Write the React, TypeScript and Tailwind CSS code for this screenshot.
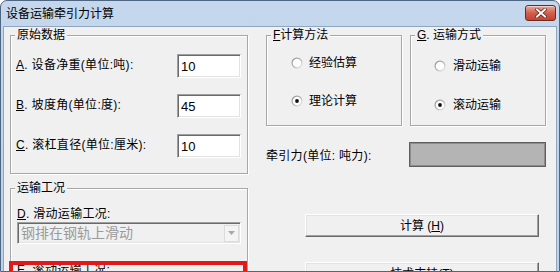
import React from "react";

const U = ({ c }: { c: string }) => <span className="underline underline-offset-[1px]">{c}</span>;

function Radio({ checked }: { checked?: boolean }) {
  return (
    <svg width="12" height="12" viewBox="0 0 12 12" className="shrink-0">
      <defs>
        <linearGradient id="rg" x1="0" y1="0" x2="1" y2="1">
          <stop offset="0" stopColor="#8a8a8a" />
          <stop offset="0.55" stopColor="#b8b8b8" />
          <stop offset="1" stopColor="#f4f4f4" />
        </linearGradient>
      </defs>
      <circle cx="6" cy="6" r="5.5" fill="url(#rg)" />
      <circle cx="6" cy="6" r="4.3" fill="#fdfdfd" />
      {checked && <circle cx="6" cy="6" r="1.9" fill="#111" />}
    </svg>
  );
}

function Group({
  title,
  className,
  children,
}: {
  title: React.ReactNode;
  className?: string;
  children?: React.ReactNode;
}) {
  return (
    <div
      className={
        "relative border border-[#a7a7a7] shadow-[inset_1px_1px_0_#ffffff,1px_1px_0_#ffffff] " +
        (className ?? "")
      }
    >
      <span className="absolute left-[4px] top-[-9px] bg-[#f0f0f0] px-[2px] text-[12px] leading-[16px] text-black whitespace-nowrap">
        {title}
      </span>
      {children}
    </div>
  );
}

function Field({ label, value }: { label: React.ReactNode; value: string }) {
  return (
    <div className="flex items-center justify-between">
      <span className="text-[12px] leading-[16px] -mt-[3px] tracking-[0.3px]">{label}</span>
      <div className="w-[64px] h-[24px] bg-white border border-t-[#a0a0a0] border-l-[#a0a0a0] border-b-white border-r-white shadow-[inset_1px_1px_0_#696969,inset_-1px_-1px_0_#e3e3e3] flex items-center pl-[3px] text-[13px] leading-none">
        {value}
      </div>
    </div>
  );
}

function Button({ children }: { children: React.ReactNode }) {
  return (
    <div className="ml-[39px] w-[234px] h-[23px] shrink-0 bg-[#f0f0f0] border border-t-white border-l-white border-b-[#696969] border-r-[#696969] shadow-[inset_-1px_-1px_0_#a0a0a0,inset_1px_1px_0_#e3e3e3] flex items-center justify-center text-[12px] leading-none">
      {children}
    </div>
  );
}

export default function App() {
  return (
    <div className="w-[560px] h-[272px] overflow-hidden bg-[#ffffff]">
      <div className="w-[560px] h-[272px] flex flex-col bg-gradient-to-b from-[#c4d7ed] to-[#bdd2ea] border border-[#4f6683] rounded-t-[7px] font-['Liberation_Sans','Noto_Sans_CJK_SC',sans-serif] text-black">
        {/* Title bar */}
        <div className="h-[25px] shrink-0 flex items-start justify-between">
          <span className="pl-[5px] pt-[5px] text-[12px] leading-[16px] text-black">设备运输牵引力计算</span>
          <div className="mt-[4px] mr-[3px] w-[31px] h-[16px] rounded-[3px] border border-[#6b2a22] bg-gradient-to-b from-[#e9a89b] via-[#d25e4b] to-[#c3432f] shadow-[inset_0_1px_0_#f6cfc6] flex items-center justify-center">
            <svg width="12" height="10" viewBox="0 0 12 10">
              <path d="M2 1.5 L10 8.5 M10 1.5 L2 8.5" stroke="#5a1b12" strokeWidth="3.4" strokeLinecap="square" />
              <path d="M2 1.5 L10 8.5 M10 1.5 L2 8.5" stroke="#ffffff" strokeWidth="2" strokeLinecap="square" />
            </svg>
          </div>
        </div>
        {/* Client area */}
        <div className="flex-1 mx-[2px] bg-[#f0f0f0] border-l border-r border-t border-[#8fa6c1] flex items-start overflow-hidden">
          {/* Left column */}
          <div className="ml-[6px] pt-[8px] w-[238px] shrink-0 flex flex-col">
            <Group title="原始数据" className="h-[139px] pt-[18px] pl-[5px] pr-[6px] flex flex-col gap-[16px]">
              <Field
                label={<><U c="A" />. 设备净重(单位:吨):</>}
                value="10"
              />
              <Field
                label={<><U c="B" />. 坡度角(单位:度):</>}
                value="45"
              />
              <Field
                label={<><U c="C" />. 滚杠直径(单位:厘米):</>}
                value="10"
              />
            </Group>
            <Group title="运输工况" className="mt-[14px] h-[120px] pt-[17px] px-[6px] flex flex-col">
              <span className="text-[12px] leading-[16px] tracking-[0.3px]">
                <U c="D" />. 滑动运输工况:
              </span>
              <div className="h-[22px] bg-[#f0f0f0] border border-t-[#a0a0a0] border-l-[#a0a0a0] border-b-white border-r-white shadow-[inset_1px_1px_0_#696969,inset_-1px_-1px_0_#e3e3e3] flex items-center justify-between pl-[3px] pr-[1px]">
                <span className="text-[14px] leading-none text-[#9a9a9a]">钢排在钢轨上滑动</span>
                <div className="w-[15px] h-[17px] bg-[#f4f4f4] border border-[#dcdcdc] flex items-center justify-center">
                  <svg width="7" height="4" viewBox="0 0 7 4">
                    <path d="M0 0 H7 L3.5 4 Z" fill="#a8a8a8" />
                  </svg>
                </div>
              </div>
              <span className="mt-[18px] text-[12px] leading-[16px] tracking-[0.3px]">
                <U c="E" />. 滚动运输工况:
              </span>
              <div className="absolute left-[-2px] top-[72px] w-[238px] h-[40px] border-[4px] border-[#e3181b]" />
            </Group>
          </div>
          {/* Right column */}
          <div className="ml-[18px] pt-[8px] w-[280px] shrink-0 flex flex-col">
            <div className="flex gap-[8px]">
              <Group title={<><U c="F" />计算方法</>} className="w-[136px] h-[91px] pt-[19px] pl-[24px] flex flex-col gap-[22px]">
                <div className="flex items-center gap-[6px] h-[16px]">
                  <Radio />
                  <span className="text-[12px] leading-[16px]">经验估算</span>
                </div>
                <div className="flex items-center gap-[6px] h-[16px]">
                  <Radio checked />
                  <span className="text-[12px] leading-[16px]">理论计算</span>
                </div>
              </Group>
              <Group title={<><U c="G" />. 运输方式</>} className="w-[136px] h-[91px] pt-[22px] pl-[23px] flex flex-col gap-[23px]">
                <div className="flex items-center gap-[7px] h-[16px]">
                  <Radio />
                  <span className="text-[12px] leading-[16px]">滑动运输</span>
                </div>
                <div className="flex items-center gap-[7px] h-[16px]">
                  <Radio checked />
                  <span className="text-[12px] leading-[16px]">滚动运输</span>
                </div>
              </Group>
            </div>
            <div className="mt-[16px] flex items-center justify-between">
              <span className="text-[12px] leading-[16px] mt-[3px] tracking-[0.3px]">牵引力(单位: 吨力):</span>
              <div className="w-[137px] h-[25px] bg-[#b4b4b4] border border-[#5f5f5f] shadow-[inset_0_0_0_1px_#8c8c8c]" />
            </div>
            <div className="mt-[47px]">
              <Button>
                计算 (<U c="H" />)
              </Button>
            </div>
            <div className="mt-[25px]">
              <Button>
                技术支持(<U c="T" />)
              </Button>
            </div>
          </div>
        </div>
      </div>
    </div>
  );
}
